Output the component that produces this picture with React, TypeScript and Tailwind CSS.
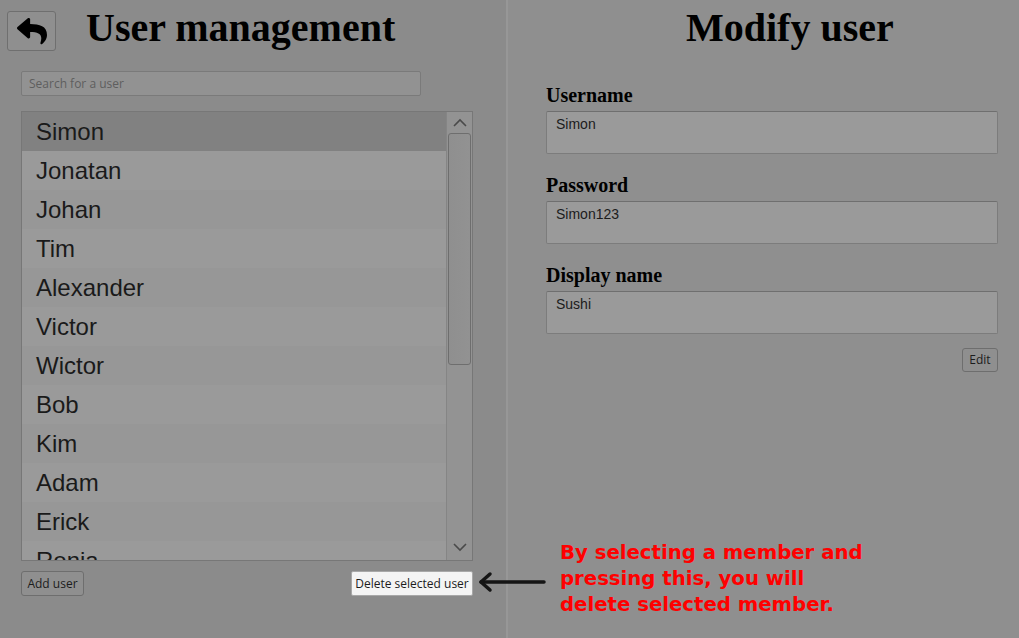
import React from 'react';
import { FaReply } from 'react-icons/fa';

const users = [
  'Simon',
  'Jonatan',
  'Johan',
  'Tim',
  'Alexander',
  'Victor',
  'Wictor',
  'Bob',
  'Kim',
  'Adam',
  'Erick',
  'Ronja',
];

const Field: React.FC<{ label: string; value: string }> = ({ label, value }) => (
  <div className="flex flex-col">
    <label className="font-['Liberation_Serif',serif] font-bold text-[20px] leading-[20px] text-black h-[26px] pt-[5px]">
      {label}
    </label>
    <div className="mt-[5px] h-[43px] w-[452px] rounded-[2px] border border-[#7c7c7c] border-t-[#6f6f6f] bg-[#9a9a9a] px-[9px] pt-[2px] font-['Liberation_Sans',sans-serif] text-[14px] text-[#1c1c1c]">
      {value}
    </div>
  </div>
);

export default function App() {
  return (
    <div className="relative flex h-[638px] w-[1019px] overflow-hidden bg-[#8d8d8d] font-['Liberation_Sans',sans-serif]">
      {/* Left: user list */}
      <div className="flex w-[506px] flex-col bg-[#8b8b8b]">
        <div className="flex items-start pt-[11px] pl-[7px]">
          <button className="flex h-[40px] w-[49px] items-center justify-center rounded-[3px] border border-[#6f6f6f] bg-[#8f8f8f] text-black">
            <FaReply size={30} />
          </button>
          <h1 className="ml-[30px] -mt-[3px] font-['Liberation_Serif',serif] text-[40px] font-bold leading-[40px] text-black">
            User management
          </h1>
        </div>

        <div className="ml-[21px] mt-[20px] flex h-[25px] w-[400px] items-center rounded-[2px] border border-[#7a7a7a] bg-[#929292] px-[7px] text-[12px] text-[#5e5e5e] font-['Open_Sans',sans-serif]">
          Search for a user
        </div>

        <div className="ml-[21px] mt-[15px] flex h-[450px] w-[452px] border border-[#777777] bg-[#969696]">
          <div className="flex flex-1 flex-col overflow-hidden">
            {users.map((u, i) => (
              <div
                key={u}
                className={`flex h-[39px] shrink-0 items-center pl-[14px] text-[24px] text-[#1a1a1a] ${
                  i === 0 ? 'bg-[#818181]' : i % 2 === 1 ? 'bg-[#9a9a9a]' : 'bg-[#979797]'
                }`}
              >
                {u}
              </div>
            ))}
          </div>
          <div className="flex w-[26px] flex-col items-center border-l border-[#858585] bg-[#939393]">
            <svg width="18" height="20" viewBox="0 0 18 20">
              <path d="M3 14 L9 8 L15 14" fill="none" stroke="#4a4a4a" strokeWidth="1.6" />
            </svg>
            <div className="mt-[1px] h-[232px] w-[23px] rounded-[3px] border border-[#6e6e6e] bg-gradient-to-r from-[#8f8f8f] to-[#929292]" />
            <div className="flex-1" />
            <svg width="18" height="20" viewBox="0 0 18 20" className="mb-[2px]">
              <path d="M3 6 L9 12 L15 6" fill="none" stroke="#4a4a4a" strokeWidth="1.6" />
            </svg>
          </div>
        </div>

        <div className="ml-[21px] mt-[10px] flex w-[452px] items-center justify-between">
          <button className="h-[25px] w-[63px] rounded-[3px] border border-[#6e6e6e] bg-[#8f8f8f] text-[12px] text-[#1c1c1c] font-['Open_Sans',sans-serif]">
            Add user
          </button>
          <button className="h-[25px] w-[122px] rounded-[2px] border border-[#a8a8a8] bg-[#f4f4f4] text-[12px] text-[#1c1c1c] font-['Open_Sans',sans-serif]">
            Delete selected user
          </button>
        </div>
      </div>

      {/* Divider */}
      <div className="w-[2px] bg-[#979797]" />

      {/* Right: modify user */}
      <div className="flex flex-1 flex-col bg-[#8f8f8f]">
        <h1 className="ml-[178px] mt-[8px] font-['Liberation_Serif',serif] text-[40px] font-bold leading-[40px] text-black">
          Modify user
        </h1>
        <div className="ml-[38px] mt-[32px] flex flex-col gap-[16px]">
          <Field label="Username" value="Simon" />
          <Field label="Password" value="Simon123" />
          <Field label="Display name" value="Sushi" />
        </div>
        <div className="ml-[38px] mt-[14px] flex w-[452px] justify-end">
          <button className="h-[24px] w-[36px] rounded-[3px] border border-[#6e6e6e] bg-[#8f8f8f] text-[12px] text-[#1c1c1c] font-['Open_Sans',sans-serif]">
            Edit
          </button>
        </div>
      </div>

      {/* Annotation */}
      <div className="absolute left-[478px] top-[571px] flex items-center">
        <svg width="68" height="22" viewBox="0 0 68 22">
          <path d="M3 11 H66" stroke="#151515" strokeWidth="3.5" strokeLinecap="round" />
          <path d="M12 3 L3 11 L12 19" fill="none" stroke="#151515" strokeWidth="3.5" strokeLinecap="round" strokeLinejoin="round" />
        </svg>
      </div>
      <div className="absolute left-[560px] top-[540px] font-['DejaVu_Sans',sans-serif] text-[19.7px] font-bold leading-[26px] text-[#ff0000]">
        By selecting a member and
        <br />
        pressing this, you will
        <br />
        delete selected member.
      </div>
    </div>
  );
}
